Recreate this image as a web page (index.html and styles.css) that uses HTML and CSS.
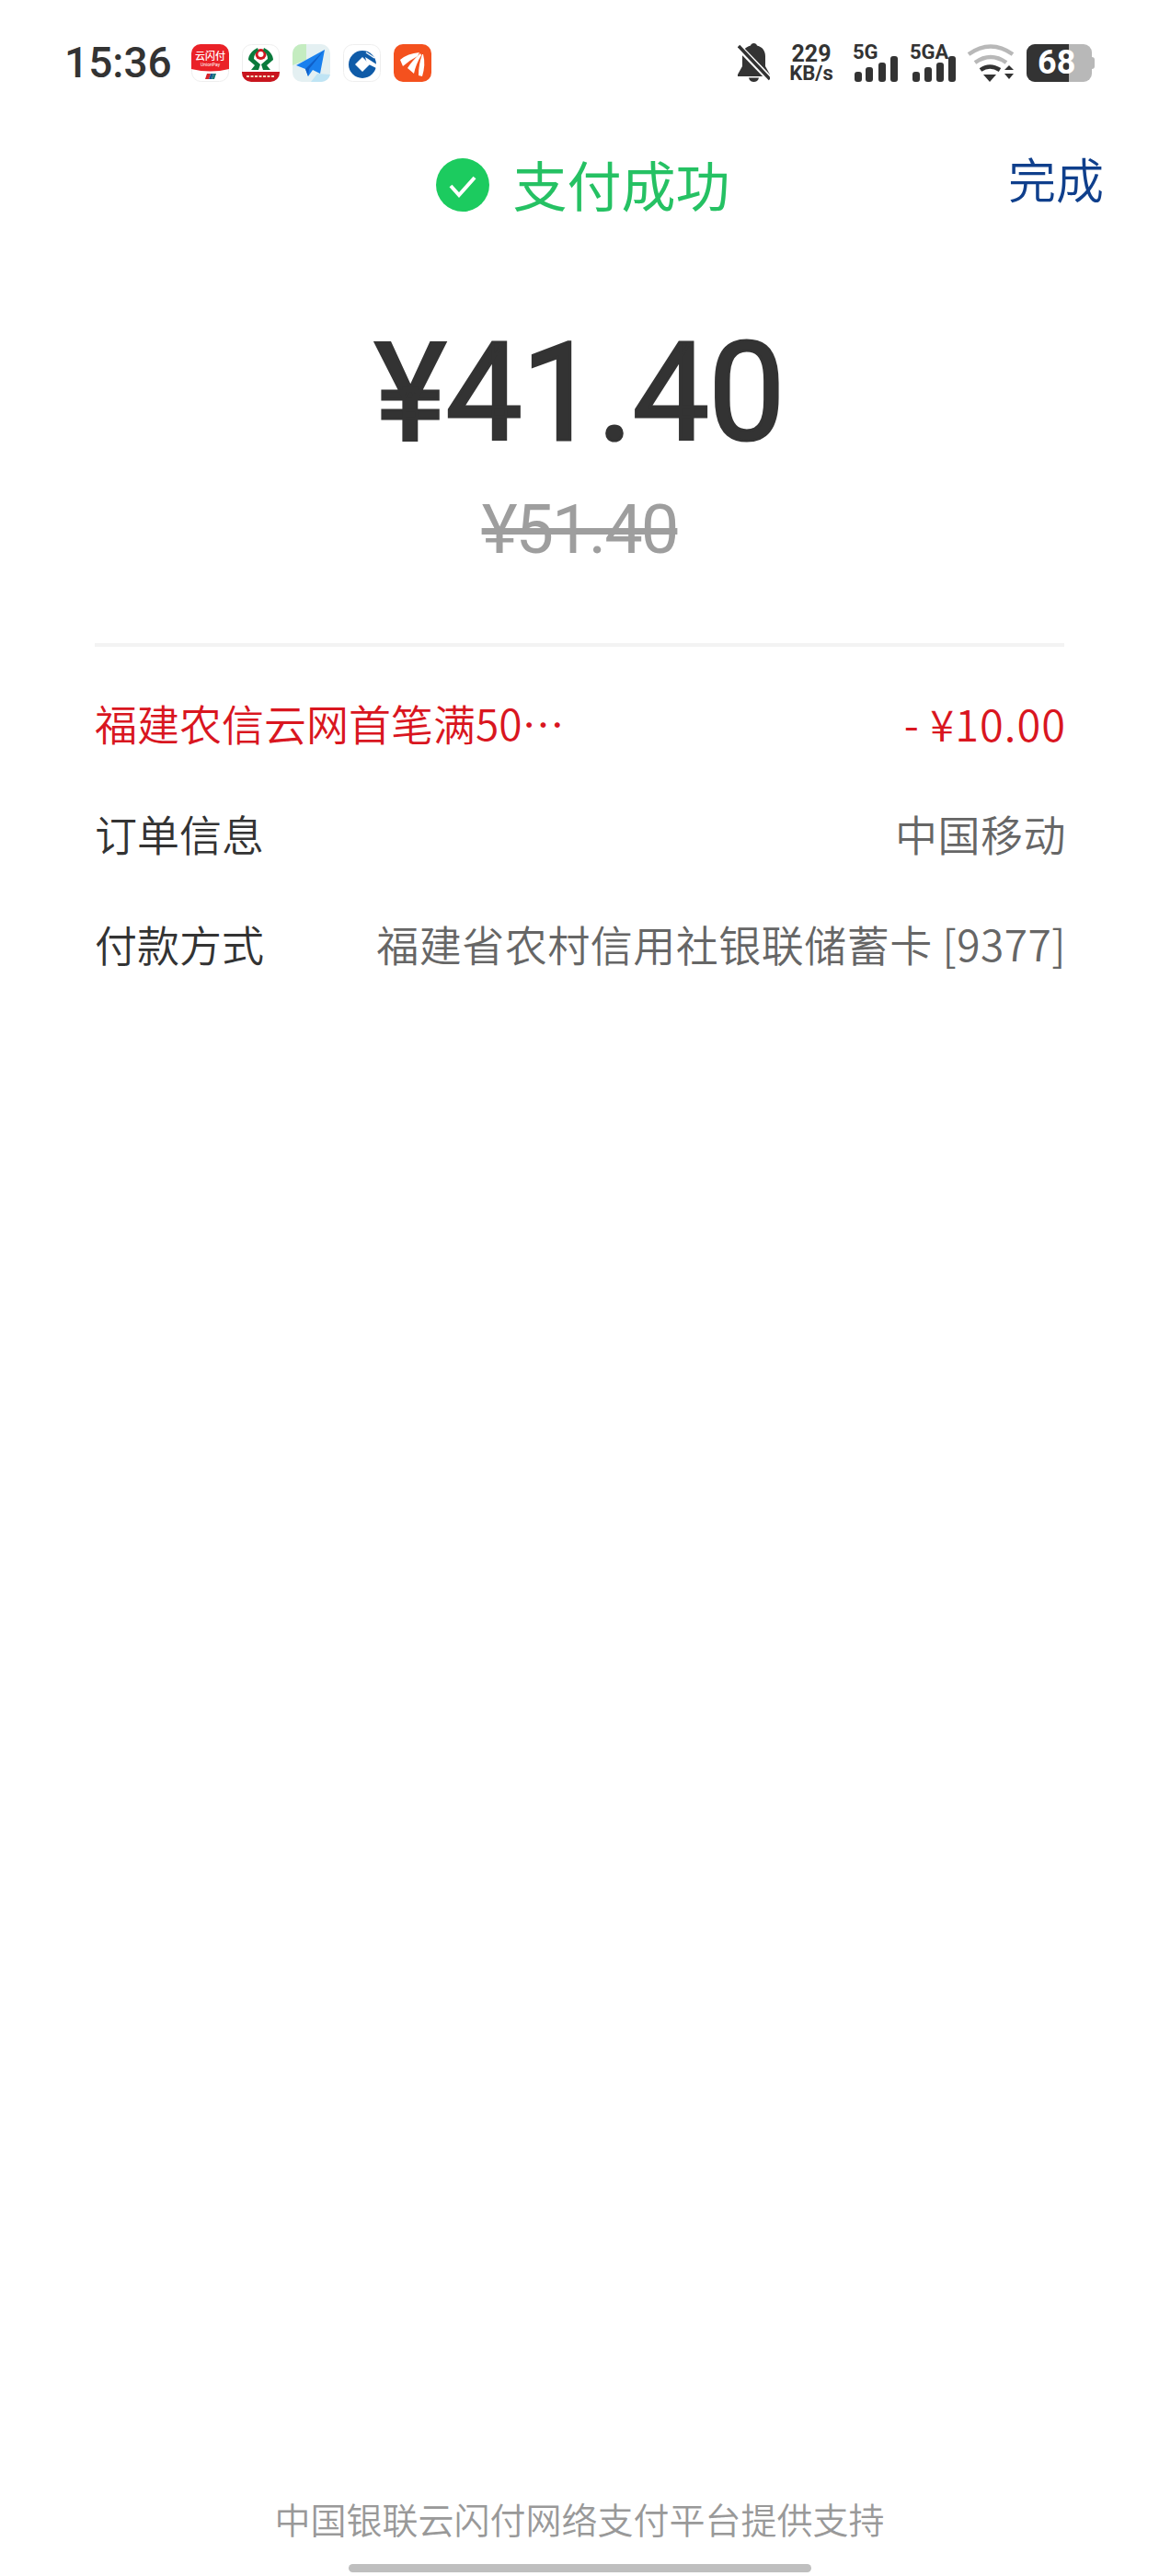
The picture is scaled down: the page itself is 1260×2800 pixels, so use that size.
FILE: index.html
```html
<!DOCTYPE html>
<html lang="zh-CN">

<head>
    <meta charset="UTF-8">
    <meta name="viewport" content="width=device-width, initial-scale=1.0">
    <title>支付成功</title>
    <link rel="stylesheet" href="styles.css">
</head>

<body>
    <div class="page">

        <div class="status-bar">
            <div class="status-left">
                <span class="clock">15:36</span>
                <div class="app-icons">
                    <!-- cloud pay -->
                    <svg class="app-icon" viewBox="0 0 41 41">
                        <rect x=".5" y=".5" width="40" height="40" rx="10" fill="#fff" stroke="#eee"/>
                        <path d="M0 10a10 10 0 0 1 10-10h21a10 10 0 0 1 10 10v17q-20 5-41 0z" fill="#ea2127"/>
                        <text class="app-text" x="20.5" y="17" text-anchor="middle">云闪付</text>
                        <text class="app-small" x="20.5" y="24" text-anchor="middle">UnionPay</text>
                        <path d="M15 38l2-6h4l-2 6z" fill="#d8232a"/>
                        <path d="M19 38l2-6h3l-2 6z" fill="#14558f"/>
                        <path d="M22 38l2-6h3l-2 6z" fill="#1a7a7a"/>
                    </svg>
                    <!-- rural credit -->
                    <svg class="app-icon" viewBox="0 0 41 41">
                        <rect x=".5" y=".5" width="40" height="40" rx="10" fill="#fff" stroke="#eee"/>
                        <path d="M0 30h41v1a10 10 0 0 1-10 10H10A10 10 0 0 1 0 31z" fill="#c9151e"/>
                        <path d="M5 35h31" stroke="#f4d8c0" stroke-width="2" stroke-dasharray="3 1.500"/>
                        <circle cx="20.5" cy="11" r="6" fill="#d01820"/>
                        <circle cx="20.5" cy="11" r="3" fill="#fff"/>
                        <path d="M17 4C11 7 7 12 7 17l7 6-4 5h8l2-6-7-6c0-4 2-7 5-9z" fill="#0a7a3c"/>
                        <path d="M24 4c6 3 10 8 10 13l-7 6 4 5h-8l-2-6 7-6c0-4-2-7-5-9z" fill="#0a7a3c"/>
                    </svg>
                    <!-- map -->
                    <svg class="app-icon" viewBox="0 0 41 41">
                        <rect width="41" height="41" rx="10" fill="#e4f0f2"/>
                        <path d="M0 10a10 10 0 0 1 10-10h5v17L0 23z" fill="#c4ecc0"/>
                        <path d="M20 41l7-9 14 1a10 10 0 0 1-10 8z" fill="#bfe4f4"/>
                        <path d="M35 6L4 23l10 4 3 8 5-7 8 4z" fill="#1a80ee"/>
                        <path d="M35 6L14 27l3 8 1-8z" fill="#0f5fc8"/>
                    </svg>
                    <!-- ccb -->
                    <svg class="app-icon" viewBox="0 0 41 41">
                        <rect x=".5" y=".5" width="40" height="40" rx="10" fill="#fff" stroke="#eee"/>
                        <circle cx="21" cy="22" r="15" fill="#0f5ba8"/>
                        <path d="M21 14l8 8-8 8-8-8z" fill="#fff"/>
                        <path d="M24 14l14 9v4l-12-6z" fill="#fff"/>
                        <path d="M25 9l9 6" stroke="#fff" stroke-width="1.500"/>
                    </svg>
                    <!-- feather -->
                    <svg class="app-icon" viewBox="0 0 41 41">
                        <rect width="41" height="41" rx="10" fill="#f4511e"/>
                        <path d="M28 9Q15 10 7 17l3 7q8-7 16-11z" fill="#fff"/>
                        <path d="M29 10q-9 8-14 16l7 6q2-10 8-20z" fill="#fff"/>
                        <path d="M31 11q-4 11-4 23l4 1q4-13 1-24z" fill="#fff"/>
                    </svg>
                </div>
            </div>
            <div class="status-right">
                <svg class="bell" viewBox="0 0 35 42">
                    <path d="M17.500 0c2 0 3 1 3.500 2.500 6 1.500 9 6 9 12V25l5 9v2H0v-2l5-9V14.500c0-6 3-10.500 9-12C14.500 1 15.500 0 17.500 0zM12 37.500h11c-.5 3-3 4.500-5.500 4.500S12.500 40.500 12 37.500z" fill="#333"/>
                    <path d="M0 3l35 36" stroke="#fff" stroke-width="7"/>
                    <path d="M1 3l34 36" stroke="#333" stroke-width="3.500"/>
                </svg>
                <div class="speed">
                    <span class="speed-num">229</span>
                    <span class="speed-unit">KB/s</span>
                </div>
                <div class="signal">
                    <span class="signal-text">5G</span>
                    <svg class="bars" viewBox="0 0 50 28">
                        <rect x="2" y="17" width="8" height="11" rx="3" fill="#333"/>
                        <rect x="14" y="12" width="8" height="16" rx="3" fill="#333"/>
                        <rect x="28" y="7" width="8" height="21" rx="3" fill="#333"/>
                        <rect x="41" y="0" width="8" height="28" rx="3" fill="#333"/>
                    </svg>
                </div>
                <div class="signal">
                    <span class="signal-text">5GA</span>
                    <svg class="bars" viewBox="0 0 50 28">
                        <rect x="3" y="17" width="8" height="11" rx="3" fill="#333"/>
                        <rect x="16" y="12" width="8" height="16" rx="3" fill="#333"/>
                        <rect x="29" y="7" width="8" height="21" rx="3" fill="#333"/>
                        <rect x="42" y="0" width="8" height="28" rx="3" fill="#333"/>
                    </svg>
                </div>
                <svg class="wifi" viewBox="0 0 52 41">
                    <path d="M2 11Q26-6 50 11" fill="none" stroke="#b8b8b8" stroke-width="4.500"/>
                    <path d="M9 20Q26 8 43 20" fill="none" stroke="#b8b8b8" stroke-width="4.500"/>
                    <path d="M15 28Q25 21 36 28" fill="none" stroke="#333" stroke-width="4.500"/>
                    <path d="M18 33h14l-7 8z" fill="#333"/>
                    <path d="M41 28l5-5 5 5z" fill="#333"/>
                    <path d="M41 32h10l-5 6z" fill="#333"/>
                </svg>
                <div class="battery">
                    <span class="battery-level"></span>
                    <span class="battery-text">68</span>
                </div>
                <span class="battery-nub"></span>
            </div>
        </div>

        <div class="header">
            <div></div>
            <div class="result">
                <svg class="check" viewBox="0 0 58 58">
                    <circle cx="29" cy="29" r="29" fill="#1ccb5f"/>
                    <path d="M16 30l9 10 17-19" fill="none" stroke="#fff" stroke-width="4"/>
                </svg>
                <span class="result-text">支付成功</span>
            </div>
            <a class="done">完成</a>
        </div>

        <div class="amount">¥41.40</div>
        <div class="amount-old">¥51.40</div>

        <div class="details">
            <div class="row row-discount">
                <span>福建农信云网首笔满50⋯</span>
                <span class="row-money">- ¥10.00</span>
            </div>
            <div class="row">
                <span class="row-label">订单信息</span>
                <span class="row-value">中国移动</span>
            </div>
            <div class="row">
                <span class="row-label">付款方式</span>
                <span class="row-value">福建省农村信用社银联储蓄卡 [9377]</span>
            </div>
        </div>

        <div class="footer">中国银联云闪付网络支付平台提供支持</div>
        <div class="home-bar"></div>

    </div>
</body>

</html>
```

FILE: styles.css
```css
body {
    margin: 0;
    background-color: #fff;
    font-family: "Noto Sans CJK SC", "Noto Sans", sans-serif;
    color: #333;
}

.page {
    display: flex;
    flex-direction: column;
    height: 2800px;
}

.status-bar {
    display: flex;
    justify-content: space-between;
    align-items: center;
    height: 42px;
    margin-top: 47px;
    padding: 0 70px;
}

.status-left,
.status-right,
.app-icons {
    display: flex;
    align-items: center;
}

.clock {
    width: 138px;
    font-family: Roboto, sans-serif;
    font-size: 46px;
    font-weight: 500;
    color: #333;
}

.app-icons {
    gap: 14px;
}

.app-icon {
    width: 41px;
    height: 41px;
}

.app-text {
    font-size: 11px;
    font-weight: 500;
    fill: #fff;
}

.app-small {
    font-family: Roboto, sans-serif;
    font-size: 5px;
    fill: #fff;
}

.status-right {
    width: 388px;
}

.bell {
    width: 35px;
    height: 42px;
    margin-right: 20px;
}

.speed {
    display: flex;
    flex-direction: column;
    align-items: center;
    width: 50px;
    margin-right: 20px;
    font-family: Roboto, sans-serif;
    font-weight: 700;
    color: #333;
}

.speed-num {
    font-size: 25px;
    line-height: 23px;
}

.speed-unit {
    font-size: 22px;
    line-height: 20px;
}

.signal {
    position: relative;
    width: 50px;
    height: 41px;
    margin-right: 12px;
}

.signal-text {
    display: block;
    font-family: Roboto, sans-serif;
    font-size: 22px;
    font-weight: 700;
    line-height: 18px;
    white-space: nowrap;
    color: #333;
}

.bars {
    position: absolute;
    left: 0;
    bottom: 0;
    width: 50px;
    height: 28px;
}

.wifi {
    width: 52px;
    height: 41px;
    margin-right: 13px;
}

.battery {
    position: relative;
    width: 71px;
    height: 41px;
    border-radius: 9px;
    overflow: hidden;
    background-color: #b8b8b8;
}

.battery-level {
    position: absolute;
    left: 0;
    top: 0;
    bottom: 0;
    width: 46px;
    background-color: #333;
}

.battery-text {
    position: absolute;
    left: 12px;
    top: 0;
    font-family: Roboto, sans-serif;
    font-size: 36px;
    font-weight: 700;
    line-height: 41px;
    color: #fff;
}

.battery-nub {
    flex: none;
    width: 3px;
    height: 13px;
    border-radius: 0 3px 3px 0;
    background-color: #b8b8b8;
}

.header {
    display: grid;
    grid-template-columns: 1fr auto 1fr;
    align-items: center;
    height: 100px;
    margin-top: 61px;
    padding: 0 60px 0 68px;
}

.result {
    display: flex;
    align-items: center;
    gap: 25px;
}

.check {
    width: 58px;
    height: 58px;
    margin-top: 2px;
}

.result-text {
    font-size: 59px;
    line-height: 100px;
    color: #25c163;
}

.done {
    justify-self: end;
    font-size: 52px;
    font-weight: 350;
    line-height: 60px;
    margin-top: -12px;
    color: #0f3f8c;
}

.amount {
    margin-top: 93px;
    font-family: Roboto, sans-serif;
    font-size: 148px;
    font-weight: 400;
    -webkit-text-stroke: 3px #333;
    letter-spacing: -0.7px;
    line-height: 170px;
    text-align: center;
    color: #333;
}

.amount-old {
    margin-top: 18px;
    font-family: Roboto, sans-serif;
    font-size: 74px;
    letter-spacing: -2px;
    line-height: 90px;
    text-align: center;
    text-decoration: line-through;
    color: #9e9e9e;
}

.details {
    margin: 78px 103px 0 103px;
    padding-top: 22px;
    border-top: 4px solid #f3f3f3;
}

.row {
    display: flex;
    justify-content: space-between;
    align-items: center;
    height: 120px;
    margin-right: -2px;
    font-size: 46px;
    font-weight: 350;
}

.row-discount {
    color: #d9161f;
}

.row-money {
    font-size: 47px;
    letter-spacing: 1px;
}

.row-label {
    color: #333;
}

.row-value {
    letter-spacing: 0.5px;
    color: #666;
}

.footer {
    margin-top: auto;
    font-size: 39px;
    font-weight: 350;
    line-height: 50px;
    text-align: center;
    color: #999;
}

.home-bar {
    width: 503px;
    height: 9px;
    margin: 25px auto 4px;
    border-radius: 5px;
    background-color: #bfbfbf;
}
```
